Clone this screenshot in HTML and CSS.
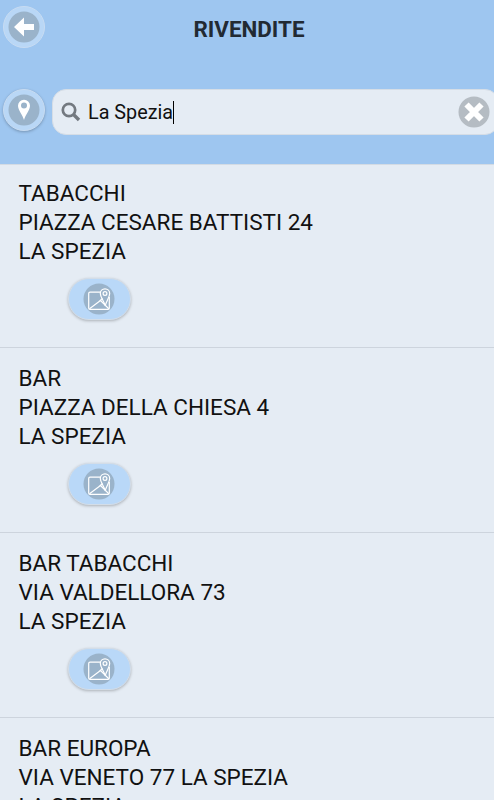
FILE: index.html
```
<!DOCTYPE html>
<html lang="it">

<head>
    <meta charset="utf-8">
    <meta name="viewport" content="width=device-width, initial-scale=1.0">
    <title>Rivendite</title>
    <link rel="stylesheet" href="styles.css">
</head>

<body>
    <!-- icona mappa usata da ogni rivendita -->
    <svg class="simboli" width="0" height="0">
        <symbol id="mappa" viewBox="0 0 32 32">
            <circle cx="16" cy="16" r="15.5" fill="#9ab3ca" />
            <g fill="none" stroke="#fff" stroke-width="1.2" stroke-linejoin="round">
                <path d="M17.200 9.200H7Q5.700 9.200 5.700 10.500V25Q5.700 26.300 7 26.300H25Q26.300 26.300 26.300 25V14" />
                <path d="M6.500 25.700L17.500 17.500L25.800 25.700M15.500 19L19.500 15.500" />
                <path d="M22.200 22.700C21 18 17.300 14 17.300 10.500A4.700 4.700 0 0 1 26.700 10.500C26.700 14 23.500 18 22.200 22.700Z" />
                <circle cx="22" cy="10.500" r="1.900" />
            </g>
        </symbol>
    </svg>

    <header>
        <div class="titolo">
            <button class="tondo" aria-label="Indietro">
                <svg width="32" height="32" viewBox="0 0 32 32">
                    <circle cx="16" cy="16" r="15.5" fill="#9ab3ca" />
                    <path d="M6 16L16 6.500V13H26V19H16V25.500Z" fill="#fff" />
                </svg>
            </button>
            <h1>RIVENDITE</h1>
        </div>
        <div class="ricerca">
            <button class="tondo" aria-label="Posizione">
                <svg width="32" height="32" viewBox="0 0 32 32">
                    <circle cx="16" cy="16" r="15.500" fill="#9ab3ca" />
                    <path fill-rule="evenodd" d="M16 26C14.500 20.500 10 16 10 11.700A6 6 0 0 1 22 11.700C22 16 17.500 20.500 16 26ZM16 8.500A3 3 0 1 0 16 14.500A3 3 0 1 0 16 8.500Z" fill="#fff" />
                </svg>
            </button>
            <div class="campo">
                <svg class="lente" width="20" height="20" viewBox="0 0 20 20">
                    <circle cx="8" cy="8" r="6.200" fill="none" stroke="#737980" stroke-width="2.700" />
                    <path d="M12.500 12.500L18 18" stroke="#737980" stroke-width="3.300" />
                </svg>
                <span class="testo">La Spezia</span>
                <svg class="cancella" width="32" height="32" viewBox="0 0 32 32">
                    <circle cx="16" cy="16" r="15.500" fill="#b5bcc3" />
                    <path d="M8.500 8.500L23.500 23.500M23.500 8.500L8.500 23.500" stroke="#fff" stroke-width="6" />
                </svg>
            </div>
        </div>
    </header>

    <section class="lista">
        <article class="rivendita">
            <p>TABACCHI</p>
            <p>PIAZZA CESARE BATTISTI 24</p>
            <p>LA SPEZIA</p>
            <button class="mappa" aria-label="Mappa"><svg width="32" height="32"><use href="#mappa" /></svg></button>
        </article>
        <article class="rivendita">
            <p>BAR</p>
            <p>PIAZZA DELLA CHIESA 4</p>
            <p>LA SPEZIA</p>
            <button class="mappa" aria-label="Mappa"><svg width="32" height="32"><use href="#mappa" /></svg></button>
        </article>
        <article class="rivendita">
            <p>BAR TABACCHI</p>
            <p>VIA VALDELLORA 73</p>
            <p>LA SPEZIA</p>
            <button class="mappa" aria-label="Mappa"><svg width="32" height="32"><use href="#mappa" /></svg></button>
        </article>
        <article class="rivendita">
            <p>BAR EUROPA</p>
            <p>VIA VENETO 77 LA SPEZIA</p>
            <p>LA SPEZIA</p>
        </article>
    </section>
</body>

</html>
```
FILE: styles.css
```
* {
    box-sizing: border-box;
}

body {
    margin: 0;
    height: 800px;
    overflow: hidden;
    background: #e5ecf4;
    font-family: Roboto, sans-serif;
    color: #111;
}

.simboli {
    display: block;
}

svg {
    flex: none;
}

button {
    display: flex;
    align-items: center;
    justify-content: center;
    padding: 0;
    border: none;
    cursor: pointer;
}

header {
    height: 164px;
    padding: 6px 0 0 3px;
    background: #9ec6f0;
}

.titolo {
    display: grid;
    grid-template-columns: 42px 1fr 41px;
    height: 83px;
}

.tondo {
    flex: none;
    width: 42px;
    height: 42px;
    border: 1px solid #c8dcf2;
    border-radius: 50%;
    background: #b9d7f6;
    box-shadow: 0 1px 3px rgba(0, 0, 0, .25);
}

.titolo .tondo {
    box-shadow: none;
}

h1 {
    margin: 0;
    font-size: 22.4px;
    font-weight: 700;
    line-height: 47px;
    text-align: center;
    color: #222a33;
}

.ricerca {
    display: flex;
    gap: 7px;
}

.campo {
    display: flex;
    flex: none;
    align-items: center;
    width: 447px;
    height: 46px;
    padding: 0 8px;
    border: 1px solid #d5dde6;
    border-radius: 14px;
    background: #e5ecf4;
}

.testo {
    margin-left: 7px;
    border-right: 1px solid #000;
    font-size: 19.8px;
    line-height: 23px;
}

.cancella {
    margin-left: auto;
}

.lista {
    border-top: 1px solid #d3dbe4;
}

.rivendita {
    height: 185px;
    padding: 16px 18.500px 0;
    border-bottom: 1px solid #cdd4dd;
}

.rivendita:first-child {
    height: 183px;
    padding-top: 14px;
}

.rivendita p {
    margin: 0;
    font-size: 22.5px;
    line-height: 29px;
}

.mappa {
    width: 63px;
    height: 42px;
    margin: 12px 0 0 49px;
    border: 1px solid #d3dde8;
    border-radius: 21px;
    background: #b9d8f8;
    box-shadow: 0 1px 3px rgba(0, 0, 0, .25);
}
```
